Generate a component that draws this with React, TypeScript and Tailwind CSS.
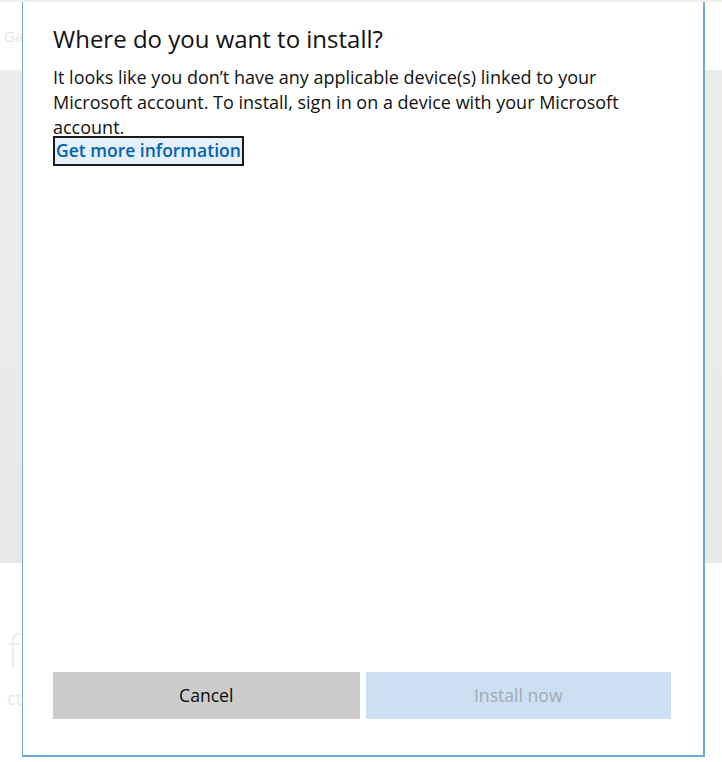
export default function App() {
  return (
    <div className="relative w-[722px] h-[762px] overflow-hidden bg-white font-['Open_Sans',sans-serif]">
      {/* page behind the dialog */}
      <div className="flex flex-col h-full">
        <div className="h-[2px] bg-[#f0f0f0]" />
        <div className="h-[68px] flex items-center px-[4px] text-[15px] text-[#e6e6e6]">Ga</div>
        <div className="h-[493px] bg-gradient-to-b from-[#ececea] to-[#e9e9e7]" />
        <div className="flex flex-col pl-[7px] pt-[62px]">
          <span className="text-[44px] leading-[50px] font-light text-[#eeeeee]">f</span>
          <span className="mt-[10px] text-[18px] text-[#dfeafa]">ction</span>
        </div>
      </div>

      {/* dialog */}
      <div className="absolute left-[22px] top-[2px] w-[683px] h-[755px] bg-white border-l border-r-2 border-b-2 border-[#6fa8dc] flex flex-col pl-[30px] pr-[32px]">
        <h1 className="pt-[21px] text-[24px] leading-[32px] text-[#111111] font-normal">
          Where do you want to install?
        </h1>
        <p className="mt-[10px] text-[18px] leading-[25px] text-[#111111]">
          It looks like you don’t have any applicable device(s) linked to your Microsoft account. To install, sign in on a device with your Microsoft account.
        </p>
        <div className="mt-[-4px]">
          <a
            href="#"
            className="inline-block border-2 border-[#1b1b1b] bg-[#e6f0fa] px-[1px] h-[30px] leading-[25px] text-[17.5px] font-semibold text-[#0063b1]"
          >
            Get more information
          </a>
        </div>
        <div className="flex-1" />
        <div className="flex gap-[6px] mb-[36px]">
          <button className="w-[307px] h-[47px] bg-[#cccccc] text-[17.6px] text-[#0a0a0a]">Cancel</button>
          <button className="w-[306px] h-[47px] bg-[#cce0f2] text-[17.6px] text-[#a3abb3]">Install now</button>
        </div>
      </div>
    </div>
  );
}
